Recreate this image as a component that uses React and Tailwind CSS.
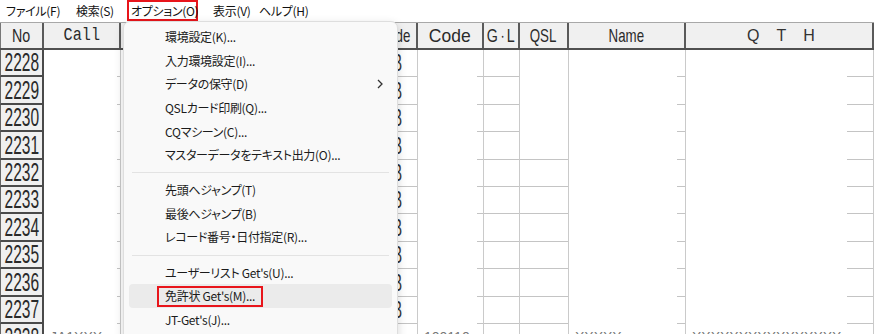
import React from 'react';

const jp = "font-['Noto_Sans_CJK_JP',sans-serif] [font-feature-settings:'palt']";
const grid = "font-['Liberation_Sans',sans-serif]";

const rowHeights = ['h-[27px]', 'h-[28px]', 'h-[27px]', 'h-[28px]', 'h-[27px]', 'h-[27px]', 'h-[28px]', 'h-[27px]', 'h-[28px]', 'h-[27px]'];

// columns after "No"; many of them sit under the open menu
const cols = [
    { key: 'call', w: 'w-[77px]', label: 'Call', sc: 'scale-x-[0.8]', mono: true, line: 'w-[3px]' },
    { key: 'date', w: 'w-[110px]', label: 'Date', sc: 'scale-x-[0.7]' },
    { key: 'time', w: 'w-[70px]', label: 'Time', sc: 'scale-x-[0.7]' },
    { key: 'his', w: 'w-[36px]', label: 'His', sc: 'scale-x-[0.7]' },
    { key: 'my', w: 'w-[35px]', label: 'My', sc: 'scale-x-[0.7]' },
    { key: 'mode', w: 'w-[46px]', label: 'Mode', sc: 'scale-x-[0.7]', line: 'w-full' },
    { key: 'code', w: 'w-[66px]', label: 'Code', sc: 'scale-x-[0.92]', line: 'w-[6px]' },
    { key: 'gl', w: 'w-[36px]', label: 'G・L', sc: 'scale-x-[0.75]', line: 'w-full' },
    { key: 'qsl', w: 'w-[49px]', label: 'QSL', sc: 'scale-x-[0.7]', line: 'w-full' },
    { key: 'name', w: 'w-[117px]', label: 'Name', sc: 'scale-x-[0.7]', line: 'w-[8px]' },
    { key: 'qth', w: 'w-[188px]', label: 'QTH', line: 'w-[26px]' },
];

const rows = [2228, 2229, 2230, 2231, 2232, 2233, 2234, 2235, 2236, 2237, 2238];

const lastRow = { call: 'JA1XXX', code: '100110', name: 'XXXXX', qth: 'XXXXXXXXXXXXXXXX' };

const HeaderCell = ({ c }) => (
    <div className={`${c.w} shrink-0 h-full flex items-center justify-center border-r-2 border-[#5a5a5a] overflow-hidden`}>
        {c.key === 'qth' ? (
            <div className="flex gap-[17px] text-[16px] text-[#333] pl-[4px]">
                <span>Q</span><span>T</span><span>H</span>
            </div>
        ) : (
            <span className={`inline-block whitespace-nowrap ${c.sc} text-[19px] leading-none text-[#2a2a2a] ${c.mono ? "font-['Liberation_Mono',monospace]" : ''}`}>
                {c.key === 'gl' ? <>G<span className="text-[12px] align-middle">・</span>L</> : c.label}
            </span>
        )}
    </div>
);

const DataCell = ({ c, i, no }) => {
    const showLine = c.line && !(c.key === 'qsl' && i < 3);
    return (
        <div className={`${c.w} shrink-0 h-full flex flex-col border-r border-[#cacaca] overflow-hidden`}>
            <div className="flex-1 flex items-center overflow-hidden">
                {c.key === 'mode' && no !== 2238 && (
                    <div className="w-full flex justify-end pr-[15px]">
                        <span className="inline-block scale-x-[0.6] origin-right text-[24px] leading-none text-[#333]">SSB</span>
                    </div>
                )}
                {no === 2238 && lastRow[c.key] && (
                    <span className="self-start pt-[6px] pl-[6px] text-[14px] leading-none text-[#777] whitespace-nowrap">{lastRow[c.key]}</span>
                )}
            </div>
            {showLine && <div className={`h-px bg-[#c4c4c4] self-end ${c.line}`} />}
        </div>
    );
};

const MenuItem = ({ h, children, arrow, active }) => (
    <div className={`${h} flex items-center justify-between pl-[36px] pr-[9px] rounded-[4px] whitespace-nowrap ${active ? 'bg-[#ebebeb]' : ''}`}>
        {children}
        {arrow && (
            <svg width="6" height="10" viewBox="0 0 6 10">
                <polyline points="1,1 5,5 1,9" fill="none" stroke="#333" strokeWidth="1.3" />
            </svg>
        )}
    </div>
);

const Sep = ({ h }) => (
    <div className={`${h} flex items-center`}>
        <div className="h-px w-full mx-[3px] bg-[#e3e3e3]" />
    </div>
);

const App = () => {
    return (
        <div className={`relative w-[874px] h-[334px] overflow-hidden bg-white ${grid}`}>
            {/* menu bar */}
            <div className={`h-[22px] flex items-start text-[12px] tracking-[-0.3px] text-[#111] whitespace-nowrap ${jp}`}>
                <span className="ml-[6px] w-[70px] h-[21px] flex items-center">ファイル(F)</span>
                <span className="w-[51px] h-[21px] flex items-center">検索(S)</span>
                <span className="w-[71px] h-[21px] flex items-center border-2 border-[#e8151b] pl-[2px]">オプション(O)</span>
                <span className="ml-[15px] w-[46px] h-[21px] flex items-center">表示(V)</span>
                <span className="h-[21px] flex items-center">ヘルプ(H)</span>
            </div>

            {/* grid header */}
            <div className="h-[28px] flex bg-[#f0f0f0] border-t border-[#a8a8a8] border-b-2 border-b-[#505050]">
                <div className="w-[44px] shrink-0 h-full flex items-center justify-center border-r-2 border-[#5a5a5a] border-l border-l-[#777]">
                    <span className="inline-block scale-x-[0.75] text-[19px] leading-none text-[#2a2a2a]">No</span>
                </div>
                {cols.map((c) => <HeaderCell key={c.key} c={c} />)}
            </div>

            {/* grid rows */}
            {rows.map((no, i) => (
                <div key={no} className={`${rowHeights[i] || 'h-[28px]'} flex`}>
                    <div className="w-[44px] shrink-0 h-full flex items-center justify-center bg-[#f0f0f0] border-l border-r-2 border-b-2 border-[#4a4a4a] border-l-[#666]">
                        <span className="inline-block scale-x-[0.62] text-[25px] leading-none text-[#2a2a2a]">{no}</span>
                    </div>
                    {cols.map((c) => <DataCell key={c.key} c={c} i={i} no={no} />)}
                </div>
            ))}

            {/* open "オプション" menu */}
            <div className={`absolute left-[123px] top-[21px] w-[275px] h-[330px] bg-[#f9f9f9] border border-[#dedede] rounded-[7px] shadow-[0_3px_10px_rgba(0,0,0,0.16)] pt-[3px] px-[5px] text-[12px] tracking-[-0.3px] text-[#1b1b1b] ${jp}`}>
                <MenuItem h="h-[24px]">環境設定(K)...</MenuItem>
                <MenuItem h="h-[23px]">入力環境設定(I)...</MenuItem>
                <MenuItem h="h-[24px]" arrow>データの保守(D)</MenuItem>
                <MenuItem h="h-[24px]">QSLカード印刷(Q)...</MenuItem>
                <MenuItem h="h-[23px]">CQマシーン(C)...</MenuItem>
                <MenuItem h="h-[24px]">マスターデータをテキスト出力(O)...</MenuItem>
                <Sep h="h-[11px]" />
                <MenuItem h="h-[24px]">先頭へジャンプ(T)</MenuItem>
                <MenuItem h="h-[23px]">最後へジャンプ(B)</MenuItem>
                <MenuItem h="h-[24px]">レコード番号・日付指定(R)...</MenuItem>
                <Sep h="h-[12px]" />
                <MenuItem h="h-[23px]">ユーザーリスト Get's(U)...</MenuItem>
                <MenuItem h="h-[24px]" active>
                    <span className="-ml-[8px] h-[21px] flex items-center px-[6px] border-2 border-[#e8151b]">免許状 Get's(M)...</span>
                </MenuItem>
                <MenuItem h="h-[24px]">JT-Get's(J)...</MenuItem>
            </div>
        </div>
    );
};

export default App;
